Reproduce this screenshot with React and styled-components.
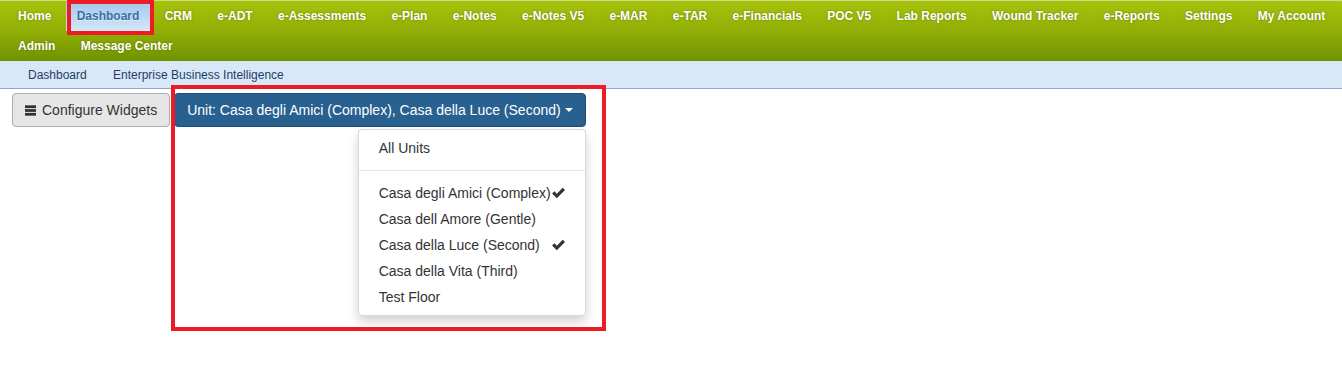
import React, { useState } from "react"
import styled, { createGlobalStyle } from "styled-components"

const GlobalStyle = createGlobalStyle`
  * {
    box-sizing: border-box;
  }

  body {
    margin: 0;
    background: #fff;
    font-family: "Liberation Sans", Arial, Helvetica, sans-serif;
    color: #333;
  }
`

const Page = styled.div`
  min-height: 100vh;
`

const TopNav = styled.ul`
  display: flex;
  flex-wrap: wrap;
  column-gap: 3.33px;
  margin: 0;
  padding: 0 0 0 7px;
  list-style: none;
  border-top: 1px solid #cfdc8e;
  background: linear-gradient(to bottom, #a8c30c 0%, #8eac05 55%, #6f9200 100%);
`

const NavItem = styled.li`
  position: relative;
  height: 30px;
  padding: 0 11px;
  line-height: 30px;
  font-size: 12px;
  font-weight: 700;
  white-space: nowrap;
  color: ${(p) => (p.$active ? "#3a6ea5" : "#fff")};
  text-shadow: ${(p) =>
    p.$active ? "0 1px 0 rgba(255, 255, 255, 0.5)" : "0 0 2px rgba(60, 70, 0, 0.55)"};
  background: ${(p) =>
    p.$active ? "linear-gradient(to bottom, #a3c5ea 0%, #d6e7f8 100%)" : "transparent"};
  cursor: pointer;

  /* red annotation frame around the selected tab */
  &::after {
    content: "";
    display: ${(p) => (p.$active ? "block" : "none")};
    position: absolute;
    top: -1px;
    left: 1px;
    right: -4px;
    bottom: -4px;
    border: 4px solid #ed1c24;
    pointer-events: none;
  }
`

const SubNav = styled.ul`
  display: flex;
  gap: 2.3px;
  height: 28px;
  margin: 0;
  padding: 1px 0 0 16px;
  list-style: none;
  background: #d9e8f8;
  border-bottom: 1px solid #93a8c2;
`

const SubNavItem = styled.li`
  padding: 0 12px;
  line-height: 27px;
  font-size: 12px;
  color: #1f3d66;
  cursor: pointer;
`

const Toolbar = styled.div`
  display: flex;
  align-items: flex-start;
  gap: 4px;
  padding: 4px 12px;
`

const Button = styled.button`
  display: inline-flex;
  align-items: center;
  height: 34px;
  padding: 6px 12px;
  font-family: inherit;
  font-size: 14px;
  line-height: 20px;
  white-space: nowrap;
  border-radius: 4px;
  cursor: pointer;
  color: ${(p) => (p.$primary ? "#fff" : "#333")};
  background: ${(p) => (p.$primary ? "#286090" : "#e6e6e6")};
  border: 1px solid ${(p) => (p.$primary ? "#204d74" : "#adadad")};
`

const ButtonGroup = styled.div`
  position: relative;

  /* red annotation frame around the unit picker */
  &::after {
    content: "";
    position: absolute;
    top: -8px;
    left: -3px;
    right: -20px;
    bottom: -204px;
    border: 4px solid #ed1c24;
    pointer-events: none;
  }
`

const Caret = styled.span`
  display: inline-block;
  width: 0;
  height: 0;
  margin-left: 4px;
  border-top: 4px solid #fff;
  border-left: 4px solid transparent;
  border-right: 4px solid transparent;
`

const Menu = styled.ul`
  position: absolute;
  top: 100%;
  right: 0;
  width: 228px;
  margin: 2px 0 0;
  padding: 5px 0;
  list-style: none;
  background: #fff;
  border: 1px solid rgba(0, 0, 0, 0.15);
  border-radius: 4px;
  box-shadow: 0 6px 12px rgba(0, 0, 0, 0.175);
  z-index: 2;
`

const MenuItem = styled.li`
  display: flex;
  align-items: center;
  justify-content: space-between;
  padding: 3px 19px 3px 20px;
  font-size: 14px;
  line-height: 20px;
  color: #333;
  white-space: nowrap;
  cursor: pointer;
`

const Divider = styled.li`
  height: 1px;
  margin: 9px 0;
  background: #e5e5e5;
`

const HamburgerIcon = () => (
  <svg width="11" height="11" viewBox="0 0 11 11" style={{ marginRight: 6 }}>
    <rect x="0" y="0.3" width="11" height="2.8" fill="#333" />
    <rect x="0" y="4.1" width="11" height="2.8" fill="#333" />
    <rect x="0" y="7.9" width="11" height="2.8" fill="#333" />
  </svg>
)

const CheckIcon = () => (
  <svg width="15" height="12" viewBox="0 0 14 12">
    <path d="M0.6 6.6 L2.9 4.3 L5.3 6.7 L11.2 0.8 L13.5 3.1 L5.3 11.3 Z" fill="#333" />
  </svg>
)

const navItems = [
  "Home",
  "Dashboard",
  "CRM",
  "e-ADT",
  "e-Assessments",
  "e-Plan",
  "e-Notes",
  "e-Notes V5",
  "e-MAR",
  "e-TAR",
  "e-Financials",
  "POC V5",
  "Lab Reports",
  "Wound Tracker",
  "e-Reports",
  "Settings",
  "My Account",
  "Admin",
  "Message Center",
]

const units = [
  { name: "Casa degli Amici (Complex)", checked: true },
  { name: "Casa dell Amore (Gentle)", checked: false },
  { name: "Casa della Luce (Second)", checked: true },
  { name: "Casa della Vita (Third)", checked: false },
  { name: "Test Floor", checked: false },
]

const App = () => {
  const [open] = useState(true)
  const selected = units.filter((u) => u.checked).map((u) => u.name)

  return (
    <Page>
      <GlobalStyle />

      <TopNav>
        {navItems.map((item) => (
          <NavItem key={item} $active={item === "Dashboard"}>
            {item}
          </NavItem>
        ))}
      </TopNav>

      <SubNav>
        <SubNavItem>Dashboard</SubNavItem>
        <SubNavItem>Enterprise Business Intelligence</SubNavItem>
      </SubNav>

      <Toolbar>
        <Button>
          <HamburgerIcon />
          Configure Widgets
        </Button>

        <ButtonGroup>
          <Button $primary>
            Unit: {selected.join(", ")}
            <Caret />
          </Button>

          {open && (
            <Menu>
              <MenuItem>All Units</MenuItem>
              <Divider />
              {units.map((u) => (
                <MenuItem key={u.name}>
                  <span>{u.name}</span>
                  {u.checked && <CheckIcon />}
                </MenuItem>
              ))}
            </Menu>
          )}
        </ButtonGroup>
      </Toolbar>
    </Page>
  )
}

export default App
